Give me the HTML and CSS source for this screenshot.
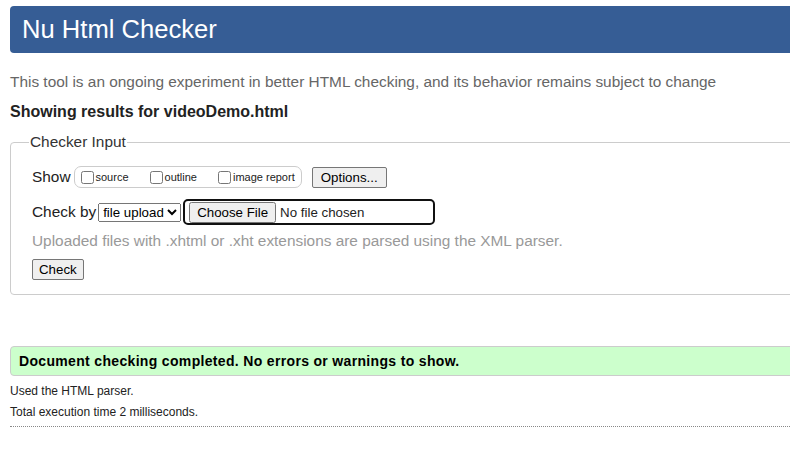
FILE: index.html
```
<!DOCTYPE html>
<html>
<head>
<meta charset="utf-8">
<title>Nu Html Checker</title>
<link rel="stylesheet" href="styles.css">
</head>
<body>
<div class="page">
  <h1 class="title">Nu Html Checker</h1>
  <p class="intro">This tool is an ongoing experiment in better HTML checking, and its behavior remains subject to change</p>
  <p class="showing">Showing results for videoDemo.html</p>
  <fieldset class="input">
    <legend>Checker Input</legend>
    <div class="row show-row">
      <span class="label">Show</span>
      <span class="options-group">
        <label class="opt"><input type="checkbox">source</label>
        <label class="opt"><input type="checkbox">outline</label>
        <label class="opt"><input type="checkbox">image report</label>
      </span>
      <button class="btn options-btn" type="button">Options...</button>
    </div>
    <div class="row check-row">
      <span class="label">Check by</span>
      <select class="method"><option>file upload</option></select>
      <span class="file-box"><input type="file" class="file"></span>
    </div>
    <p class="hint">Uploaded files with .xhtml or .xht extensions are parsed using the XML parser.</p>
    <button class="btn check-btn" type="button">Check</button>
  </fieldset>
  <div class="success">Document checking completed. No errors or warnings to show.</div>
  <p class="meta">Used the HTML parser.</p>
  <p class="meta">Total execution time 2 milliseconds.</p>
  <hr class="dotted">
</div>
</body>
</html>
```
FILE: styles.css
```
html { overflow: hidden; }
body {
  margin: 0;
  font-family: "Liberation Sans", Arial, sans-serif;
  color: #222;
  background: #fff;
}
.page {
  margin: 6px -40px 0 10px;
}
.title {
  margin: 0;
  height: 47px;
  box-sizing: border-box;
  padding: 0 12px;
  background: #365d95;
  color: #fff;
  font-weight: normal;
  font-size: 25.6px;
  line-height: 47px;
  border-radius: 4px;
}
.intro {
  margin: 18px 0 0;
  font-size: 15.4px;
  line-height: 22px;
  color: #666;
}
.showing {
  margin: 8px 0 0;
  font-size: 16px;
  font-weight: bold;
  line-height: 22px;
  color: #222;
}
.input {
  margin: 10px 0 0;
  padding: 13px 21px 14px;
  border: 1px solid #ccc;
  border-radius: 4px;
}
.input legend {
  padding: 0 1px;
  margin-left: -3px;
  font-size: 15.4px;
  color: #333;
}
.row {
  display: flex;
  align-items: center;
}
.label { font-size: 15.4px; color: #222; }
.show-row { height: 24px; margin-top: 1px; }
.options-group {
  display: flex;
  align-items: center;
  margin-left: 3px;
  height: 20px;
  padding: 0 6px 0 6px;
  border: 1px solid #ccc;
  border-radius: 7px;
  font-size: 11px;
}
.opt {
  display: flex;
  align-items: center;
  margin-right: 21px;
}
.opt:last-child { margin-right: 0; }
.opt input { margin: 0 2px 0 0; width: 13px; height: 13px; }
.btn {
  font-family: "Liberation Sans", Arial, sans-serif;
  font-size: 13.3px;
  padding: 1px 8px;
  border: 1px solid #767676;
  border-radius: 2px;
  background: #efefef;
  color: #000;
}
.options-btn { margin-left: 10px; height: 21px; }
.check-row { margin-top: 10px; height: 26px; }
.method {
  margin-left: 2px;
  height: 19px;
  font-family: "Liberation Sans", Arial, sans-serif;
  font-size: 13.3px;
}
.file-box {
  margin-left: 2px;
  width: 244px;
  height: 22px;
  border: 2px solid #111;
  border-radius: 5px;
  display: flex;
  align-items: center;
  padding-left: 4px;
}
.file {
  font-family: "Liberation Sans", Arial, sans-serif;
  font-size: 13.3px;
}
.file::file-selector-button {
  padding: 1px 6px;
}
.hint {
  margin: 6px 0 0;
  font-size: 15.4px;
  line-height: 20px;
  color: #999;
}
.check-btn { margin-top: 8px; height: 21px; padding: 1px 6px; }
.success {
  margin-top: 51px;
  height: 30px;
  box-sizing: border-box;
  padding: 0 8px;
  line-height: 28px;
  background: #ccffcc;
  border: 1px solid #ccc;
  border-radius: 4px;
  font-size: 14px;
  letter-spacing: 0.33px;
  font-weight: bold;
  color: #000;
}
.meta {
  margin: 8px 0 0;
  font-size: 12px;
  line-height: 15px;
  color: #222;
}
.meta + .meta { margin-top: 6px; }
.dotted {
  margin: 6px 0 0;
  border: 0;
  border-top: 1px dotted #888;
}
```
